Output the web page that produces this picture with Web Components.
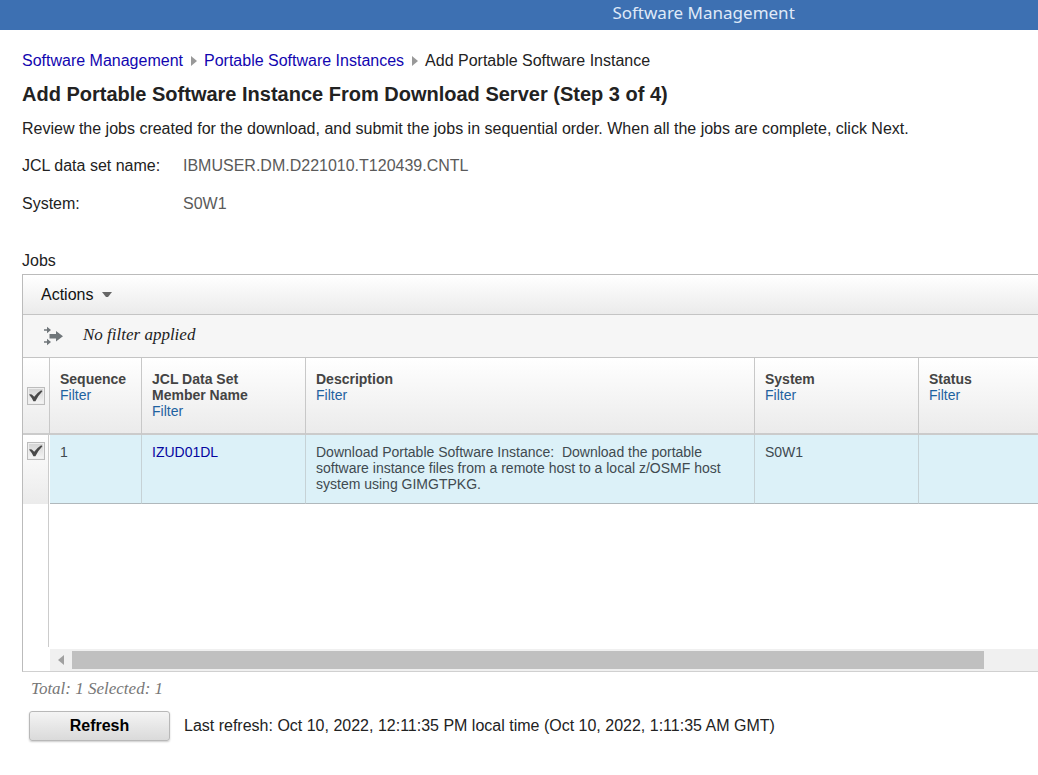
<!DOCTYPE html>
<html lang="en">
<head>
<meta charset="utf-8">
<meta name="viewport" content="width=device-width">
<title>Software Management</title>
<style>
html, body { margin: 0; background: #fff; }
body { font: 16px/20px "Liberation Sans", Arial, sans-serif; color: #222; overflow-x: hidden; }
</style>
</head>
<body>
<app-page></app-page>
<script>
function define(name, html, setup) {
  const template = document.createElement('template');
  template.innerHTML = html;
  customElements.define(name, class extends HTMLElement {
    constructor() {
      super();
      this.attachShadow({ mode: 'open' }).append(template.content.cloneNode(true));
    }
    connectedCallback() { if (setup) setup(this, this.shadowRoot); }
  });
}

define('app-banner', `
<style>
  :host { display: block; background: #3d70b2; color: #dfe9f8; height: 30px; }
  header { padding-left: 59%; font: 17px/26px "Noto Sans", "Open Sans", sans-serif; white-space: nowrap; }
</style>
<header><slot></slot></header>`);

define('crumb-link', `
<style>
  :host { display: flex; align-items: center; }
  a { color: #1206b0; text-decoration: none; }
  svg { margin: 0 7px 0 8px; }
</style>
<a href="#"><slot></slot></a>
<svg width="6" height="10" viewBox="0 0 6 10" aria-hidden="true"><path d="M0 0L6 5L0 10Z" fill="#999"/></svg>`);

define('crumb-trail', `
<style>
  :host { display: block; }
  nav { display: flex; }
</style>
<nav aria-label="Breadcrumb"><slot></slot></nav>`);

define('detail-field', `
<style>
  :host { display: flex; }
  dt { width: 161px; flex: none; }
  dd { margin: 0; color: #5a5a5a; }
</style>
<dt><slot name="label"></slot></dt><dd><slot></slot></dd>`);

define('check-box', `
<style>
  :host { display: block; width: 18px; height: 18px; margin-left: 4px; }
  label { display: block; position: relative; }
  input { appearance: none; display: block; box-sizing: border-box; width: 18px; height: 18px; margin: 0;
    border: 1px solid #bcbcbc; background: linear-gradient(#d2d2d2, #f6f6f6); box-shadow: inset 0 0 0 1px #eee; }
  svg { position: absolute; inset: 0; pointer-events: none; visibility: hidden; }
  input:checked + svg { visibility: visible; }
</style>
<label><input type="checkbox" checked>
<svg width="18" height="18" viewBox="0 0 18 18" aria-hidden="true"><path d="M2 7.6Q3.6 7 4.8 7.6L7.2 9.8Q10.2 5.6 14.2 3.2L15.4 4.2Q11.2 8.4 8.4 14.2H6.4Q4.6 10.4 2 7.6Z" fill="#484848"/></svg></label>`,
(el, root) => root.querySelector('input').setAttribute('aria-label', el.getAttribute('label')));

define('action-bar', `
<style>
  :host { display: flex; align-items: center; height: 39px; border-bottom: 1px solid #c4c4c4;
    background: linear-gradient(#fff, #ebebeb); }
  button { display: flex; align-items: center; gap: 9px; margin-left: 18px; padding: 0; border: 0;
    background: none; font: inherit; color: #111; }
</style>
<button type="button"><slot></slot><svg width="10" height="6" viewBox="0 0 10 6" aria-hidden="true"><path d="M0 0H10L6 5H4Z" fill="#666"/></svg></button>`);

define('filter-bar', `
<style>
  :host { display: flex; align-items: center; height: 42px; border-bottom: 1px solid #c4c4c4; background: #f6f6f6; }
  svg { margin: 0 20px; }
  em { font: italic 17px/20px "Liberation Serif", Georgia, serif; padding-bottom: 2px; }
</style>
<svg width="20" height="20" viewBox="0 0 20 20" aria-hidden="true"><g fill="#70767a">
<path d="M1 3.2H4V0.8L8 4L4 7.2V4.8H1Z"/><path d="M1 15.2H4V12.8L8 16L4 19.2V16.8H1Z"/>
<path d="M6.5 8H13V5L20 10.2L13 15.4V12.5H6.5Z"/></g></svg>
<em><slot></slot></em>`);

define('scroll-strip', `
<style>
  :host { display: flex; align-items: center; height: 22px; margin: 2px 0 0 27px; background: #f0f0f0; }
  svg { margin: 0 8px; flex: none; }
  .track { flex: 1; display: flex; }
  .thumb { width: 94.4%; height: 18px; background: #c0c0c0; }
</style>
<svg width="6" height="10" viewBox="0 0 6 10" aria-hidden="true"><path d="M6 0V10L0 5Z" fill="#a0a0a0"/></svg>
<div class="track"><div class="thumb"></div></div>`);

define('jobs-table', `
<style>
  :host { display: block; }
  table { width: 100%; table-layout: fixed; border-collapse: separate; border-spacing: 0;
    font-size: 14px; line-height: 16px; }
  .pick { width: 27px; } .seq { width: 92px; } .mid { width: 164px; } .desc { width: 449px; }
  th, td { box-sizing: border-box; text-align: left; vertical-align: top; border-right: 1px solid #c8c8c8; }
  th { height: 77px; padding: 13px 10px 0; color: #444; border-bottom: 2px solid #cbcbcb;
    background: linear-gradient(#fff, #ebebeb); }
  td { height: 69px; padding: 9px 10px 0; color: #404a50; background: #dcf1f8;
    border-bottom: 1px solid #b0b8bc; border-right-color: #c6d2d6; }
  th:first-child { padding: 0; vertical-align: middle; }
  td:first-child { padding: 7px 0 0; background: linear-gradient(#fff, #ebebeb);
    border-right-color: #fff; border-bottom: 0; box-shadow: inset -1px 0 #ccc; }
  th:last-child, td:last-child { border-right: 0; }
  a { text-decoration: none; }
  th a { display: block; font-weight: normal; color: #1f62a0; }
  td a { color: #0505a0; }
  .text { white-space: pre-wrap; }
</style>
<table aria-label="Jobs">
<colgroup><col class="pick"><col class="seq"><col class="mid"><col class="desc"><col class="mid"><col></colgroup>
<thead><tr>
<th><check-box label="Select all jobs"></check-box></th>
<th>Sequence<a href="#">Filter</a></th>
<th>JCL Data Set Member Name<a href="#">Filter</a></th>
<th>Description<a href="#">Filter</a></th>
<th>System<a href="#">Filter</a></th>
<th>Status<a href="#">Filter</a></th>
</tr></thead>
<tbody><tr>
<td><check-box label="Select job 1"></check-box></td>
<td>1</td>
<td><a href="#">IZUD01DL</a></td>
<td class="text">Download Portable Software Instance:  Download the portable software instance files from a remote host to a local z/OSMF host system using GIMGTPKG.</td>
<td>S0W1</td>
<td></td>
</tr></tbody>
</table>`);

define('jobs-panel', `
<style>
  :host { display: block; border: 1px solid #bbb; border-right: 0; border-bottom-color: #d0d0d0; }
  .blank { height: 143px; width: 25px; border-right: 1px solid #ccc; }
</style>
<action-bar>Actions</action-bar>
<filter-bar>No filter applied</filter-bar>
<jobs-table></jobs-table>
<div class="blank"></div>
<scroll-strip></scroll-strip>`);

define('refresh-bar', `
<style>
  :host { display: flex; align-items: center; gap: 14px; }
  button { box-sizing: border-box; width: 141px; height: 30px; padding: 0; border: 1px solid #b8b8b8;
    border-radius: 3px; background: linear-gradient(#f4f4f4, #dadada); box-shadow: 0 1px 2px #ccc;
    font: bold 16px/20px "Liberation Sans", Arial, sans-serif; color: #000; }
</style>
<button type="button">Refresh</button><span><slot></slot></span>`);

define('app-page', `
<style>
  :host { display: block; }
  main { padding: 21px 0 30px 22px; }
  h1 { margin: 11px 0 13px; font-size: 20px; line-height: 24px; }
  p { margin: 0 0 17px; }
  dl { margin: 0 0 37px; display: grid; gap: 18px; }
  h2 { margin: 0 0 3px; font-size: 16px; line-height: 20px; font-weight: normal; }
  .total { margin: 7px 0 12px 9px; font: italic 17px/20px "Liberation Serif", Georgia, serif; color: #777; }
  refresh-bar { margin-left: 7px; }
</style>
<app-banner>Software Management</app-banner>
<main>
<crumb-trail><crumb-link>Software Management</crumb-link><crumb-link>Portable Software Instances</crumb-link><span>Add Portable Software Instance</span></crumb-trail>
<h1>Add Portable Software Instance From Download Server (Step 3 of 4)</h1>
<p>Review the jobs created for the download, and submit the jobs in sequential order. When all the jobs are complete, click Next.</p>
<dl>
<detail-field><span slot="label">JCL data set name:</span>IBMUSER.DM.D221010.T120439.CNTL</detail-field>
<detail-field><span slot="label">System:</span>S0W1</detail-field>
</dl>
<h2>Jobs</h2>
<jobs-panel></jobs-panel>
<div class="total">Total: 1 Selected: 1</div>
<refresh-bar>Last refresh: Oct 10, 2022, 12:11:35 PM local time (Oct 10, 2022, 1:11:35 AM GMT)</refresh-bar>
</main>`);
</script>
</body>
</html>
